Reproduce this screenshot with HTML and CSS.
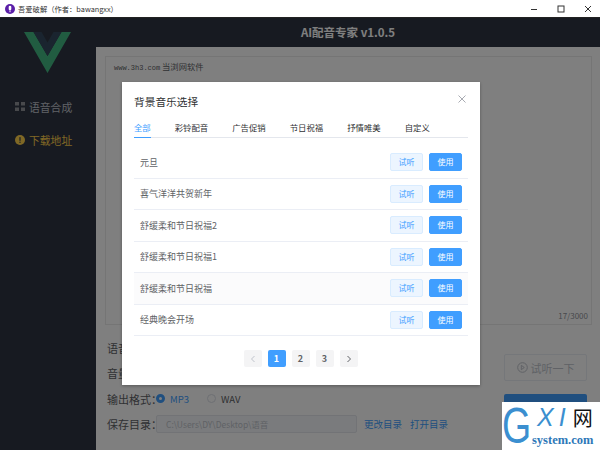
FILE: index.html
```html
<!DOCTYPE html>
<html lang="en">
<head>
    <meta charset="UTF-8">
    <meta name="viewport" content="width=device-width, initial-scale=1.0">
    <title>吾爱破解</title>
    <link rel="stylesheet" href="styles.css">
</head>
<body>

    <!-- Window title bar -->
    <div class="titlebar">
        <div class="app-icon">
            <svg width="10" height="10" viewBox="0 0 10 10"><circle cx="5" cy="5" r="5" fill="#5b1fa8"/><rect x="3.7" y="1.8" width="2.6" height="4.6" rx="1.3" fill="#fff"/><rect x="4.5" y="6.6" width="1" height="1.6" fill="#fff"/></svg>
        </div>
        <span class="window-title">吾爱破解（作者：bawangxx）</span>
        <div class="window-controls">
            <svg width="8" height="8" viewBox="0 0 8 8"><path d="M1 4.5h6" stroke="#333" stroke-width="1"/></svg>
            <svg width="8" height="8" viewBox="0 0 8 8"><rect x="1" y="1" width="6" height="6" fill="none" stroke="#333" stroke-width="1"/></svg>
            <svg width="8" height="8" viewBox="0 0 8 8"><path d="M1 1l6 6M7 1L1 7" stroke="#333" stroke-width="1"/></svg>
        </div>
    </div>

    <div class="app">
        <!-- Sidebar -->
        <div class="sidebar">
            <svg class="logo" width="47" height="41" viewBox="0 0 47 41">
                <path d="M0 0h9.5l14 24L37.500 0H47L23.500 41z" fill="#42b983"/>
                <path d="M9.500 0h8l6 10.500L29.500 0h8l-14 24z" fill="#35495e"/>
            </svg>
            <div class="nav-item">
                <svg width="10" height="9" viewBox="0 0 10 9"><rect x="0" y="0" width="4" height="3.500" fill="#909399"/><rect x="6" y="0" width="4" height="3.500" fill="#909399"/><rect x="0" y="5.500" width="4" height="3.500" fill="#909399"/><rect x="6" y="5.500" width="4" height="3.500" fill="#909399"/></svg>
                <span>语音合成</span>
            </div>
            <div class="nav-item nav-active">
                <svg width="10" height="10" viewBox="0 0 12 12"><circle cx="6" cy="6" r="6" fill="#ffd04b"/><rect x="5.300" y="2.500" width="1.400" height="4.500" fill="#2f3749"/><rect x="5.300" y="8" width="1.400" height="1.500" fill="#2f3749"/></svg>
                <span>下载地址</span>
            </div>
        </div>

        <div class="content">
            <div class="header">AI配音专家 v1.0.5</div>
            <div class="main">
                <div class="text-box">
                    <div class="text-value"><span class="text-latin">www.3h3.com</span> 当浏网软件</div>
                    <div class="text-count">17/3000</div>
                </div>
                <div class="options">
                    <div class="form">
                        <div class="form-row"><label>语音：</label></div>
                        <div class="form-row"><label>音量：</label></div>
                        <div class="form-row">
                            <label>输出格式：</label>
                            <span class="radio radio-on"></span><span class="radio-text on">MP3</span>
                            <span class="radio"></span><span class="radio-text">WAV</span>
                        </div>
                        <div class="form-row">
                            <label>保存目录：</label>
                            <div class="path-input">C:\Users\DY\Desktop\语音</div>
                            <a class="link">更改目录</a>
                            <a class="link">打开目录</a>
                        </div>
                    </div>
                    <div class="actions">
                        <div class="btn-try">
                            <svg width="11" height="11" viewBox="0 0 11 11"><circle cx="5.500" cy="5.500" r="4.800" fill="none" stroke="#c0c4cc" stroke-width="1"/><path d="M4.300 3.300l3 2.200-3 2.200z" fill="none" stroke="#c0c4cc" stroke-width="1"/></svg>
                            试听一下
                        </div>
                        <div class="btn-start"></div>
                    </div>
                </div>
            </div>
        </div>

        <!-- Dark mask and dialog -->
        <div class="mask"></div>
        <div class="dialog">
            <div class="dialog-head">
                <span class="dialog-title">背景音乐选择</span>
                <svg class="dialog-close" width="8" height="8" viewBox="0 0 8 8"><path d="M.5.5l7 7M7.500.5l-7 7" stroke="#a8abb2" stroke-width="1"/></svg>
            </div>
            <div class="tabs">
                <span class="tab tab-active">全部</span>
                <span class="tab">彩铃配音</span>
                <span class="tab">广告促销</span>
                <span class="tab">节日祝福</span>
                <span class="tab">抒情唯美</span>
                <span class="tab">自定义</span>
            </div>
            <div class="music-list">
                <div class="music-row"><span>元旦</span><div class="btn-light">试听</div><div class="btn-blue">使用</div></div>
                <div class="music-row"><span>喜气洋洋共贺新年</span><div class="btn-light">试听</div><div class="btn-blue">使用</div></div>
                <div class="music-row"><span>舒缓柔和节日祝福2</span><div class="btn-light">试听</div><div class="btn-blue">使用</div></div>
                <div class="music-row"><span>舒缓柔和节日祝福1</span><div class="btn-light">试听</div><div class="btn-blue">使用</div></div>
                <div class="music-row row-hover"><span>舒缓柔和节日祝福</span><div class="btn-light">试听</div><div class="btn-blue">使用</div></div>
                <div class="music-row"><span>经典晚会开场</span><div class="btn-light">试听</div><div class="btn-blue">使用</div></div>
            </div>
            <div class="pager">
                <div class="page"><svg width="6" height="8" viewBox="0 0 6 8"><path d="M4.500 1L1.500 4l3 3" fill="none" stroke="#c0c4cc" stroke-width="1"/></svg></div>
                <div class="page page-active">1</div>
                <div class="page">2</div>
                <div class="page">3</div>
                <div class="page"><svg width="6" height="8" viewBox="0 0 6 8"><path d="M1.500 1l3 3-3 3" fill="none" stroke="#606266" stroke-width="1"/></svg></div>
            </div>
        </div>
    </div>

    <!-- Site watermark -->
    <div class="watermark">
        <span class="wm-g">G</span>
        <div class="wm-right">
            <div class="wm-top"><span class="wm-xi">XI</span><span class="wm-cn">网</span></div>
            <div class="wm-bottom">system.com</div>
        </div>
    </div>

</body>
</html>
```

FILE: styles.css
```css
* {
    box-sizing: border-box;
}
html, body {
    height: 100%;
}
body {
    margin: 0;
    width: 600px;
    height: 450px;
    overflow: hidden;
    display: flex;
    flex-direction: column;
    position: relative;
    background-color: #fff;
    font-family: "Noto Sans CJK SC", "Liberation Sans", sans-serif;
    color: #606266;
}
.titlebar {
    height: 18px;
    flex-shrink: 0;
    display: flex;
    align-items: center;
    padding-left: 5px;
    background-color: #fff;
    border-bottom: 1px solid #222;
}
.app-icon {
    display: flex;
    margin-right: 3px;
}
.window-title {
    font-size: 7.300px;
    color: #333;
}
.window-controls {
    margin-left: auto;
    display: flex;
    gap: 19px;
    padding-right: 8px;
}
.app {
    flex: 1;
    display: flex;
    position: relative;
    min-height: 0;
}
.sidebar {
    width: 96px;
    flex-shrink: 0;
    background-color: #2f3542;
}
.logo {
    display: block;
    margin: 14px 0 0 24px;
}
.nav-item {
    display: flex;
    align-items: center;
    gap: 4px;
    padding-left: 15px;
    height: 33px;
    font-size: 10.800px;
    color: #c0c4cc;
}
.sidebar .nav-item:first-of-type {
    margin-top: 17px;
}
.nav-active {
    color: #ffd04b;
}
.content {
    flex: 1;
    display: flex;
    flex-direction: column;
    min-width: 0;
}
.header {
    height: 29px;
    flex-shrink: 0;
    background-color: #2f3542;
    color: #fff;
    font-size: 11.500px;
    font-weight: 700;
    text-align: center;
    line-height: 29px;
    font-family: "Noto Sans CJK SC", "Open Sans", sans-serif;
}
.main {
    flex: 1;
    background-color: #fff;
    padding: 9px 8px 0 9px;
    display: flex;
    flex-direction: column;
}
.text-box {
    height: 269px;
    flex-shrink: 0;
    border: 1px solid #eaeaea;
    padding: 3px 8px;
    display: flex;
    flex-direction: column;
    justify-content: space-between;
    font-size: 8.300px;
}
.text-value {
    color: #606266;
}
.text-latin {
    font-family: "Liberation Mono", monospace;
    font-size: 7px;
}
.text-count {
    align-self: flex-end;
    margin-right: -5px;
    font-size: 8px;
    color: #909399;
}
.options {
    flex: 1;
    display: flex;
    justify-content: space-between;
    padding-right: 5px;
}
.form {
    padding-top: 10px;
}
.form-row {
    height: 25.500px;
    display: flex;
    align-items: center;
    font-size: 11px;
    white-space: nowrap;
}
.form-row label {
    width: 49px;
    flex-shrink: 0;
    margin-left: 2px;
    color: #606266;
}
.radio {
    width: 9px;
    height: 9px;
    border-radius: 50%;
    border: 1px solid #dcdfe6;
    background-color: #fff;
    margin-right: 5px;
}
.radio-on {
    border: 3px solid #409eff;
}
.radio-text {
    font-size: 9.500px;
    margin-right: 18px;
    color: #606266;
}
.radio-text.on {
    color: #409eff;
}
.path-input {
    width: 201px;
    height: 18px;
    background-color: #f5f7fa;
    border: 1px solid #e4e7ed;
    border-radius: 2px;
    padding-left: 9px;
    font-size: 8.500px;
    line-height: 16px;
    color: #c0c4cc;
    margin-right: 7px;
}
.link {
    color: #409eff;
    font-size: 9.500px;
    margin-right: 8px;
}
.actions {
    width: 83px;
    padding-top: 29px;
    display: flex;
    flex-direction: column;
    gap: 13px;
}
.btn-try {
    height: 27px;
    border: 1px solid #ebeef5;
    border-radius: 2px;
    display: flex;
    align-items: center;
    justify-content: center;
    gap: 3px;
    font-size: 11px;
    color: #c0c4cc;
}
.btn-start {
    height: 30px;
    border-radius: 2px;
    background-color: #409eff;
}
.mask {
    position: absolute;
    inset: 0;
    background-color: rgba(0, 0, 0, 0.5);
}
.dialog {
    position: absolute;
    left: 122px;
    top: 64px;
    width: 358px;
    height: 303px;
    background-color: #fff;
    padding: 0 12px;
    box-shadow: 0 1px 3px rgba(0, 0, 0, 0.3);
}
.dialog-head {
    height: 40px;
    padding-right: 1px;
    display: flex;
    justify-content: space-between;
}
.dialog-title {
    font-size: 10.700px;
    color: #303133;
    margin-top: 12px;
}
.dialog-close {
    margin-top: 13px;
    margin-right: 1px;
}
.tabs {
    display: flex;
    gap: 24px;
    height: 15.500px;
    border-bottom: 1.500px solid #e4e7ed;
    font-size: 8.400px;
    line-height: 10px;
    color: #303133;
}
.tab {
    height: 15.500px;
}
.tab-active {
    color: #409eff;
    border-bottom: 1.500px solid #409eff;
}
.music-list {
    margin-top: 9.500px;
}
.music-row {
    height: 31.500px;
    display: flex;
    align-items: center;
    gap: 6px;
    padding: 0 6px;
    border-bottom: 1px solid #ebeef5;
    font-size: 9px;
}
.music-row span {
    flex: 1;
}
.row-hover {
    background-color: #fbfbfc;
}
.btn-light, .btn-blue {
    width: 33px;
    height: 18px;
    border-radius: 2px;
    font-size: 8px;
    line-height: 16px;
    text-align: center;
}
.btn-light {
    background-color: #ecf5ff;
    border: 1px solid #d9ecff;
    color: #409eff;
}
.btn-blue {
    background-color: #409eff;
    border: 1px solid #409eff;
    color: #fff;
}
.pager {
    display: flex;
    justify-content: center;
    gap: 6px;
    margin-top: 14px;
    margin-left: -1px;
}
.page {
    width: 18px;
    height: 17px;
    border-radius: 2px;
    background-color: #f4f4f5;
    display: flex;
    align-items: center;
    justify-content: center;
    font-size: 9px;
    font-weight: 700;
    color: #606266;
}
.page-active {
    background-color: #409eff;
    color: #fff;
}
.watermark {
    position: absolute;
    left: 502px;
    top: 402px;
    width: 98px;
    height: 48px;
    background-color: #fff;
    display: flex;
}
.wm-g {
    width: 30px;
    height: 48px;
    font-size: 50px;
    line-height: 48px;
    color: #3b8fd0;
    font-family: "Liberation Sans", sans-serif;
    transform: scaleX(0.75);
    transform-origin: left;
    flex-shrink: 0;
}
.wm-right {
    flex: 1;
}
.wm-top {
    display: flex;
    align-items: center;
    height: 31px;
    padding-left: 5px;
}
.wm-xi {
    font-size: 25px;
    font-style: italic;
    letter-spacing: 5px;
    color: #3b8fd0;
    font-family: "Liberation Sans", sans-serif;
}
.wm-cn {
    font-size: 20px;
    color: #111;
    margin-left: 2px;
}
.wm-bottom {
    font-family: "Liberation Serif", serif;
    font-weight: 700;
    font-size: 12.500px;
    color: #2d78b8;
    line-height: 14px;
}
```
